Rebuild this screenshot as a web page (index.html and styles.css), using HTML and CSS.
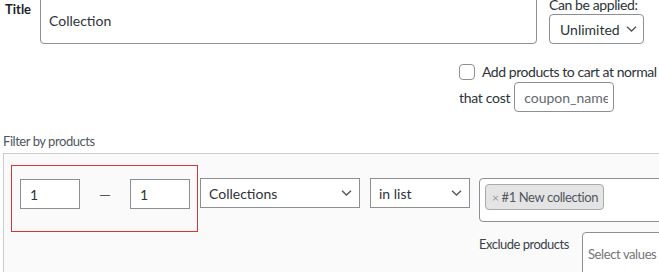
FILE: index.html
```html
<!DOCTYPE html>
<html lang="en">
<head>
  <meta charset="UTF-8" />
  <title>Coupon rule</title>
  <link rel="stylesheet" href="styles.css">
</head>
<body>
  <div class="page">
    <div class="top-row">
      <label class="title-label" for="title">Title</label>
      <input id="title" class="title-input" type="text" value="Collection" />
      <div class="apply">
        <span class="apply-label">Can be applied:</span>
        <div class="select rounded apply-select">
          <span>Unlimited</span>
          <svg class="chevron" width="11" height="6" viewBox="0 0 11 6"><polyline points="1,0.8 5.5,5 10,0.8" /></svg>
        </div>
      </div>
    </div>

    <div class="options">
      <label class="check-row">
        <span class="checkbox"></span>
        <span class="check-text">Add products to cart at normal price</span>
      </label>
      <div class="cost-row">
        <span>that cost</span>
        <input class="coupon" type="text" placeholder="coupon_name" />
      </div>
    </div>

    <div class="filter-label">Filter by products</div>
    <div class="panel">
      <div class="range">
        <input class="qty" type="text" value="1" />
        <span class="dash">&mdash;</span>
        <input class="qty" type="text" value="1" />
      </div>
      <div class="select type-select">
        <span>Collections</span>
        <svg class="chevron" width="11" height="6" viewBox="0 0 11 6"><polyline points="1,0.8 5.5,5 10,0.8" /></svg>
      </div>
      <div class="select method-select">
        <span>in list</span>
        <svg class="chevron" width="11" height="6" viewBox="0 0 11 6"><polyline points="1,0.8 5.5,5 10,0.8" /></svg>
      </div>
      <div class="values">
        <div class="multi">
          <span class="tag"><span class="tag-x">&times;</span>#1 New collection</span>
        </div>
        <div class="exclude">
          <span class="exclude-label">Exclude products</span>
          <div class="multi exclude-box">
            <span class="placeholder">Select values</span>
          </div>
        </div>
      </div>
    </div>
  </div>
</body>
</html>
```

FILE: styles.css
```css
* {
  box-sizing: border-box;
  margin: 0;
  padding: 0;
}

body {
  background-color: #fff;
  color: #2c3338;
  font-family: 'Segoe UI', Lato, 'Liberation Sans', sans-serif;
  font-size: 14px;
  overflow: hidden;
}

.page {
  width: 900px;
  margin-top: -4px;
  padding-left: 3px;
}

input {
  font-family: inherit;
  font-size: 14px;
  color: #2c3338;
  border: 1px solid #8c8f94;
  background: #fff;
  outline: none;
}

/* top row */
.top-row {
  display: flex;
  align-items: flex-start;
}

.title-label {
  width: 37px;
  padding: 4px 0 0 2px;
  font-weight: bold;
  font-size: 13px;
  line-height: 18px;
  color: #1d2327;
}

.title-input {
  width: 497px;
  height: 48px;
  padding: 0 8px;
  border-radius: 4px;
}

.apply {
  display: flex;
  flex-direction: column;
  margin-left: 12px;
}

.apply-label {
  line-height: 18px;
  letter-spacing: -0.4px;
  color: #2c3338;
}

.select {
  display: flex;
  align-items: center;
  justify-content: space-between;
  height: 30px;
  border: 1px solid #8c8f94;
  background: #fff;
  padding: 0 7px 0 8px;
  color: #2c3338;
}

.select.rounded {
  border-radius: 4px;
}

.apply-select {
  width: 95px;
  padding: 0 6px 0 10px;
}

.chevron {
  fill: none;
  stroke: #50575e;
  stroke-width: 1.4;
}

/* options */
.options {
  display: flex;
  flex-direction: column;
  margin: 18px 0 0 456px;
  white-space: nowrap;
  letter-spacing: -0.3px;
}

.check-row {
  display: flex;
  align-items: center;
  gap: 7px;
  height: 19px;
}

.check-text {
  letter-spacing: -0.45px;
}

.checkbox {
  width: 16px;
  height: 16px;
  border: 1px solid #8c8f94;
  border-radius: 4px;
  background: #fff;
}

.cost-row {
  display: flex;
  align-items: center;
  gap: 4px;
  margin-top: 1px;
}

.coupon {
  width: 100px;
  height: 30px;
  padding: 0 5px 0 9px;
  border-radius: 4px;
  letter-spacing: 0;
}

.coupon::placeholder {
  color: #646970;
}

/* filter panel */
.filter-label {
  margin-top: 20px;
  font-size: 13px;
  line-height: 18px;
  letter-spacing: -0.45px;
  color: #50575e;
}

.panel {
  display: flex;
  align-items: flex-start;
  margin-top: 3px;
  padding: 11px 7px 30px;
  border: 1px solid #ccc;
  background: #fafafa;
}

.range {
  display: flex;
  align-items: center;
  justify-content: space-between;
  width: 187px;
  padding: 13px 7px 22px 8px;
  border: 1px solid #d63638;
}

.qty {
  width: 60px;
  height: 30px;
  padding: 0 9px;
}

.dash {
  color: #50575e;
  font-size: 15px;
}

.type-select {
  width: 160px;
  margin: 13px 0 0 2px;
}

.method-select {
  width: 100px;
  margin: 13px 0 0 10px;
}

.values {
  flex: 1;
  margin: 13px 0 0 9px;
}

.multi {
  min-height: 44px;
  padding: 5px;
  border: 1px solid #8c8f94;
  border-radius: 4px;
  background: #fff;
}

.tag {
  display: inline-flex;
  align-items: center;
  height: 26px;
  padding: 0 5px 0 6px;
  border: 1px solid #aaa;
  border-radius: 4px;
  background: #e4e4e4;
  font-size: 13px;
  letter-spacing: -0.4px;
  color: #50575e;
}

.tag-x {
  margin-right: 3px;
  color: #999;
  font-size: 12px;
}

.exclude {
  display: flex;
  align-items: flex-start;
  margin-top: 10px;
}

.exclude-label {
  width: 103px;
  padding-top: 4px;
  font-size: 13px;
  letter-spacing: -0.5px;
  color: #3c434a;
}

.exclude-box {
  flex: 1;
  padding: 12px 5px 5px;
}

.placeholder {
  font-size: 13px;
  letter-spacing: -0.4px;
  color: #757575;
}
```
